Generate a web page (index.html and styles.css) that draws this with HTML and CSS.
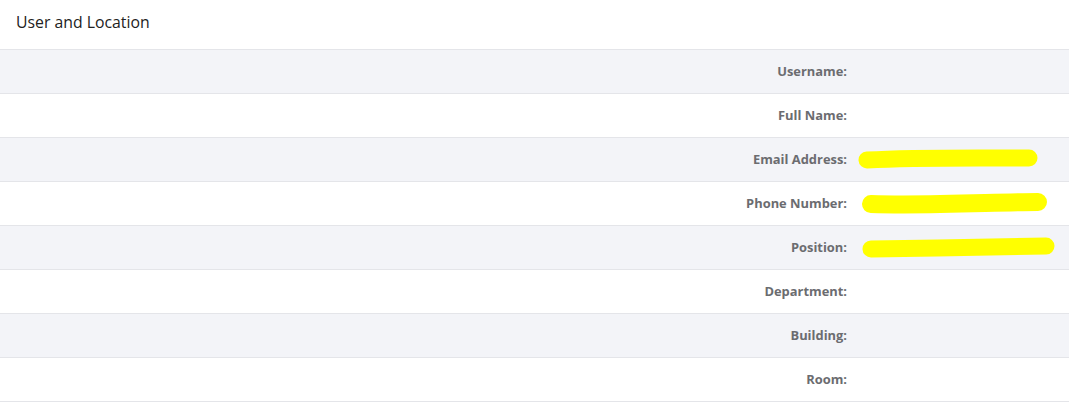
FILE: index.html
```html
<!DOCTYPE html>
<html lang="en">

<head>
    <meta charset="UTF-8">
    <title>User and Location</title>
    <link rel="stylesheet" href="styles.css">
</head>

<body>
    <div class="panel">
        <div class="panel-title">User and Location</div>
        <div class="details">
            <div class="row">
                <div class="label">Username:</div>
                <div class="value"></div>
            </div>
            <div class="row">
                <div class="label">Full Name:</div>
                <div class="value"></div>
            </div>
            <div class="row">
                <div class="label">Email Address:</div>
                <div class="value">
                    <svg class="mark" width="211" height="24" viewBox="0 0 211 24">
                        <path d="M9 12 C60 9 130 10 171 10" stroke="#ffff00" stroke-width="17" stroke-linecap="round" fill="none" />
                    </svg>
                </div>
            </div>
            <div class="row">
                <div class="label">Phone Number:</div>
                <div class="value">
                    <svg class="mark" width="211" height="24" viewBox="0 0 211 24">
                        <path d="M13 12 C70 14 140 10 180 10" stroke="#ffff00" stroke-width="18" stroke-linecap="round" fill="none" />
                    </svg>
                </div>
            </div>
            <div class="row">
                <div class="label">Position:</div>
                <div class="value">
                    <svg class="mark" width="211" height="24" viewBox="0 0 211 24">
                        <path d="M13 13 C70 12 150 11 188 10" stroke="#ffff00" stroke-width="17" stroke-linecap="round" fill="none" />
                    </svg>
                </div>
            </div>
            <div class="row">
                <div class="label">Department:</div>
                <div class="value"></div>
            </div>
            <div class="row">
                <div class="label">Building:</div>
                <div class="value"></div>
            </div>
            <div class="row">
                <div class="label">Room:</div>
                <div class="value"></div>
            </div>
        </div>
    </div>
</body>

</html>
```

FILE: styles.css
```css
body {
    margin: 0;
    padding: 0;
    background: #fff;
    font-family: "Open Sans", Lato, sans-serif;
}

.panel-title {
    box-sizing: border-box;
    height: 49px;
    padding: 0 16px 5px 16px;
    display: flex;
    align-items: center;
    font-size: 15.8px;
    color: #222;
}

.details {
    border-top: 1px solid #e4e5e9;
}

.row {
    display: grid;
    grid-template-columns: 1fr 211px;
    column-gap: 11px;
    align-items: center;
    height: 43px;
    border-bottom: 1px solid #e4e5e9;
}

.row:nth-child(odd) {
    background: #f3f4f8;
}

.label {
    text-align: right;
    font-size: 12.9px;
    font-weight: bold;
    color: #6b6c70;
    margin-top: -1px;
}

.value {
    height: 24px;
}

.mark {
    display: block;
}
```
